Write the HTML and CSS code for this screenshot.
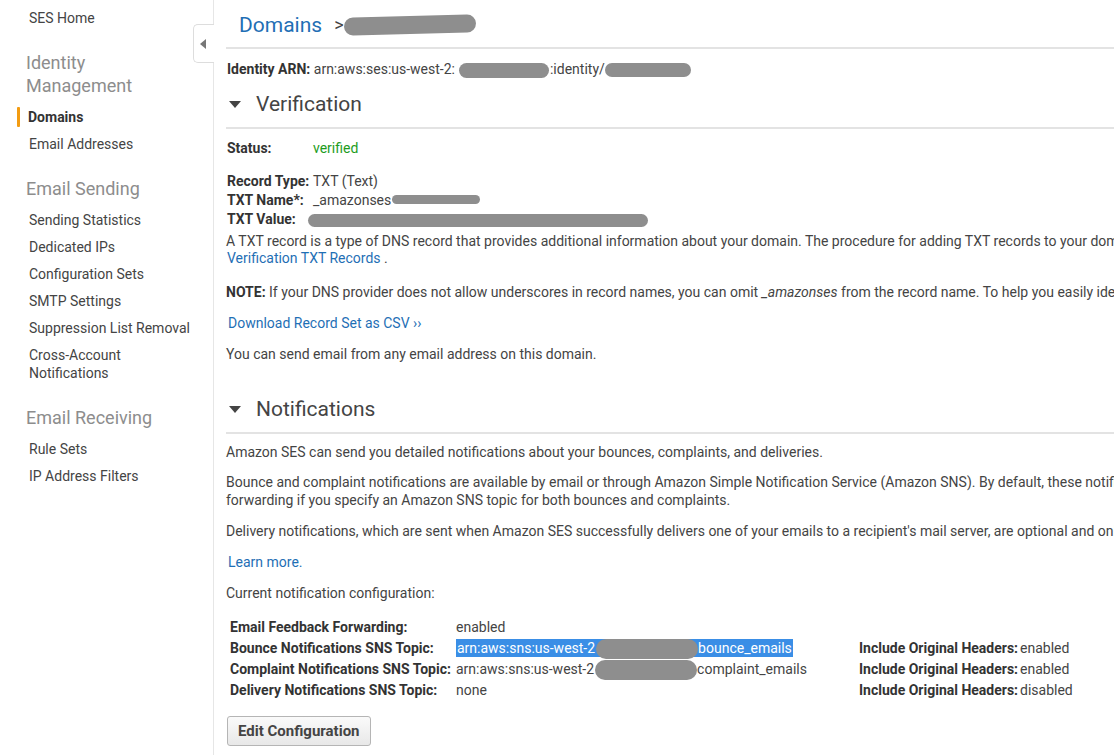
FILE: index.html
```html
<!DOCTYPE html>
<html>
<head>
<meta charset="utf-8">
<link rel="stylesheet" href="styles.css">
</head>
<body>
<div class="page">
  <nav class="sidebar">
    <div class="nav-item">SES Home</div>
    <div class="nav-head">Identity<br>Management</div>
    <div class="nav-item active">Domains</div>
    <div class="nav-item">Email Addresses</div>
    <div class="nav-head">Email Sending</div>
    <div class="nav-item">Sending Statistics</div>
    <div class="nav-item">Dedicated IPs</div>
    <div class="nav-item">Configuration Sets</div>
    <div class="nav-item">SMTP Settings</div>
    <div class="nav-item">Suppression List Removal</div>
    <div class="nav-item two">Cross-Account<br>Notifications</div>
    <div class="nav-head">Email Receiving</div>
    <div class="nav-item">Rule Sets</div>
    <div class="nav-item">IP Address Filters</div>
    <div class="toggle"><span class="tri-left"></span></div>
  </nav>
  <main class="main">
    <header class="crumbs">
      <a class="crumb-link">Domains</a>
      <span class="crumb-sep">&gt;</span>
      <span class="redact r-head"></span>
    </header>
    <div class="arn"><b>Identity ARN:</b> arn:aws:ses:us-west-2:<span class="redact r-arn1"></span>:identity/<span class="redact r-arn2"></span></div>

    <h2 class="section-head"><span class="caret"></span>Verification</h2>
    <div class="kv status"><b class="k">Status:</b><span class="ok">verified</span></div>
    <div class="records">
      <div class="kv"><b class="k">Record Type:</b><span>TXT (Text)</span></div>
      <div class="kv"><b class="k">TXT Name*:</b><span>_amazonses<span class="redact r-name"></span></span></div>
      <div class="kv"><b class="k">TXT Value:</b><span><span class="redact r-value"></span></span></div>
    </div>
    <p class="para tight">A TXT record is a type of DNS record that provides additional information about your domain. The procedure for adding TXT records to your domain depends on who provides your DNS service. For general information, see Amazon SES Domain<br><a class="link">Verification TXT Records</a> .</p>
    <p class="para note"><b>NOTE:</b> If your DNS provider does not allow underscores in record names, you can omit <i>_amazonses</i> from the record name. To help you easily identify this record within your domain's DNS settings, you can optionally prefix the record value with amazonses.</p>
    <p class="para dl"><a class="link">Download Record Set as CSV ››</a></p>
    <p class="para">You can send email from any email address on this domain.</p>

    <h2 class="section-head second"><span class="caret"></span>Notifications</h2>
    <p class="para first">Amazon SES can send you detailed notifications about your bounces, complaints, and deliveries.</p>
    <p class="para bc">Bounce and complaint notifications are available by email or through Amazon Simple Notification Service (Amazon SNS). By default, these notifications are sent via email to the address that sent the email. You can disable email feedback<br>forwarding if you specify an Amazon SNS topic for both bounces and complaints.</p>
    <p class="para dn">Delivery notifications, which are sent when Amazon SES successfully delivers one of your emails to a recipient's mail server, are optional and only available through Amazon SNS.</p>
    <p class="para"><a class="link">Learn more.</a></p>
    <p class="para">Current notification configuration:</p>

    <table class="config">
      <tr><th>Email Feedback Forwarding:</th><td class="v">enabled</td><th></th><td></td></tr>
      <tr><th>Bounce Notifications SNS Topic:</th><td class="v"><span class="sel">arn:aws:sns:us-west-2<span class="redact r-sns"></span>bounce_emails</span></td><th>Include Original Headers:</th><td>enabled</td></tr>
      <tr><th>Complaint Notifications SNS Topic:</th><td class="v">arn:aws:sns:us-west-2<span class="redact r-sns"></span>complaint_emails</td><th>Include Original Headers:</th><td>enabled</td></tr>
      <tr><th>Delivery Notifications SNS Topic:</th><td class="v">none</td><th>Include Original Headers:</th><td>disabled</td></tr>
    </table>

    <button class="btn">Edit Configuration</button>
  </main>
</div>
</body>
</html>
```

FILE: styles.css
```css
* { box-sizing: border-box; }
html, body {
  margin: 0;
  padding: 0;
  width: 1114px;
  height: 755px;
  overflow: hidden;
  background: #fff;
}
body {
  font-family: Roboto, "Liberation Sans", sans-serif;
  font-size: 14px;
  color: #444;
}
.page {
  display: flex;
  align-items: flex-start;
  min-height: 755px;
}
.sidebar {
  position: relative;
  flex: 0 0 214px;
  width: 214px;
  min-height: 755px;
  border-right: 1px solid #e6e6e6;
  padding-top: 4.5px;
}
.nav-item {
  position: relative;
  height: 27px;
  line-height: 27px;
  padding-left: 29px;
  color: #444;
  white-space: nowrap;
}
.nav-item.two {
  height: 45px;
  line-height: 18px;
  padding-top: 4.5px;
}
.nav-item.active {
  font-weight: 700;
  color: #333;
  padding-left: 28px;
}
.nav-item.active::before {
  content: "";
  position: absolute;
  left: 17px;
  top: 3.5px;
  width: 3px;
  height: 20px;
  background: #f39c12;
  border-radius: 1px;
}
.nav-head {
  font-size: 18px;
  line-height: 23px;
  color: #8d8d8d;
  padding-left: 26px;
  margin: 19px 0 7px;
}
.toggle {
  position: absolute;
  top: 24px;
  right: -1px;
  width: 21px;
  height: 39px;
  background: #fff;
  border: 1px solid #ddd;
  border-right: none;
  border-radius: 5px 0 0 5px;
  display: flex;
  align-items: center;
  justify-content: center;
}
.tri-left {
  width: 0;
  height: 0;
  border-top: 5px solid transparent;
  border-bottom: 5px solid transparent;
  border-right: 6px solid #777;
  margin-left: -2px;
}
.main {
  flex: 0 0 auto;
  width: 1400px;
  padding-left: 12px;
}
.crumbs {
  height: 49px;
  border-bottom: 2px solid #e3e3e3;
  padding: 3px 0 0 13px;
  font-size: 21px;
  line-height: 26px;
  display: flex;
  align-items: center;
}
.crumb-link { color: #1f6fb5; }
.crumb-sep {
  color: #444;
  font-size: 18px;
  margin-left: 12px;
}
.redact {
  display: inline-block;
  background: #8e8e8e;
  border-radius: 10px;
  vertical-align: middle;
}
.r-head {
  width: 132px;
  height: 18px;
  transform: rotate(-1.5deg);
}
.arn {
  margin-top: 11px;
  line-height: 18px;
  padding-left: 1px;
  white-space: nowrap;
}
.arn b { color: #333; }
.r-arn1 {
  width: 90px;
  height: 15px;
  margin: 0 1px 0 4px;
}
.r-arn2 {
  width: 86px;
  height: 14px;
}
.section-head {
  margin: 14px 0 0;
  font-size: 21px;
  font-weight: 400;
  line-height: 24px;
  color: #444;
  padding: 0 0 11px 3px;
  border-bottom: 2px solid #e3e3e3;
  display: flex;
  align-items: center;
}
.section-head.second { margin-top: 34px; }
.caret {
  width: 0;
  height: 0;
  border-left: 6px solid transparent;
  border-right: 6px solid transparent;
  border-top: 7px solid #444;
  margin-right: 15px;
}
.kv {
  display: flex;
  line-height: 19px;
  white-space: nowrap;
  padding-left: 1px;
}
.kv .k {
  width: 86px;
  flex: 0 0 86px;
  color: #333;
}
.status { margin-top: 10px; }
.ok { color: #1d9c1d; }
.records { margin-top: 14px; }
.r-name {
  width: 88px;
  height: 9px;
  margin-left: 1px;
  margin-top: -4px;
}
.r-value {
  width: 340px;
  height: 13px;
  margin-left: -5px;
}
.para {
  margin: 13px 0 0;
  line-height: 18px;
  white-space: nowrap;
}
.para.tight {
  margin-top: 4px;
  line-height: 17px;
}
.para.note { margin-top: 16px; }
.para.dl { margin-top: 13px; }
.para.first { margin-top: 9px; }
.para.bc { margin-top: 12px; }
.para.dn { margin-top: 13px; }
.para b { color: #333; }
.link { color: #1f6fb5; padding-left: 2px; }
.tight .link { padding-left: 1px; }
.config {
  margin-top: 15px;
  border-collapse: collapse;
  white-space: nowrap;
}
.config th, .config td {
  padding: 0;
  height: 21px;
  line-height: 21px;
  text-align: left;
  vertical-align: middle;
}
.config th {
  font-weight: 700;
  color: #333;
}
.config th:first-child { width: 230px; padding-left: 4px; }
.config td.v { width: 399px; }
.config th:nth-child(3) { padding-left: 4px; width: 165px; }
.config td:last-child { padding-left: 0; }
.sel {
  background: #3a8ee6;
  color: #fff;
  padding: 1px 1px;
}
.r-sns {
  width: 102px;
  height: 20px;
  margin-left: 1px;
  vertical-align: -6px;
}
.btn {
  margin-top: 15px;
  margin-left: 1px;
  height: 30px;
  padding: 0 10px;
  font-family: Roboto, "Liberation Sans", sans-serif;
  font-size: 15px;
  font-weight: 700;
  color: #444;
  background: linear-gradient(#fafafa, #e8e8e8);
  border: 1px solid #b5b5b5;
  border-radius: 3px;
}
```
